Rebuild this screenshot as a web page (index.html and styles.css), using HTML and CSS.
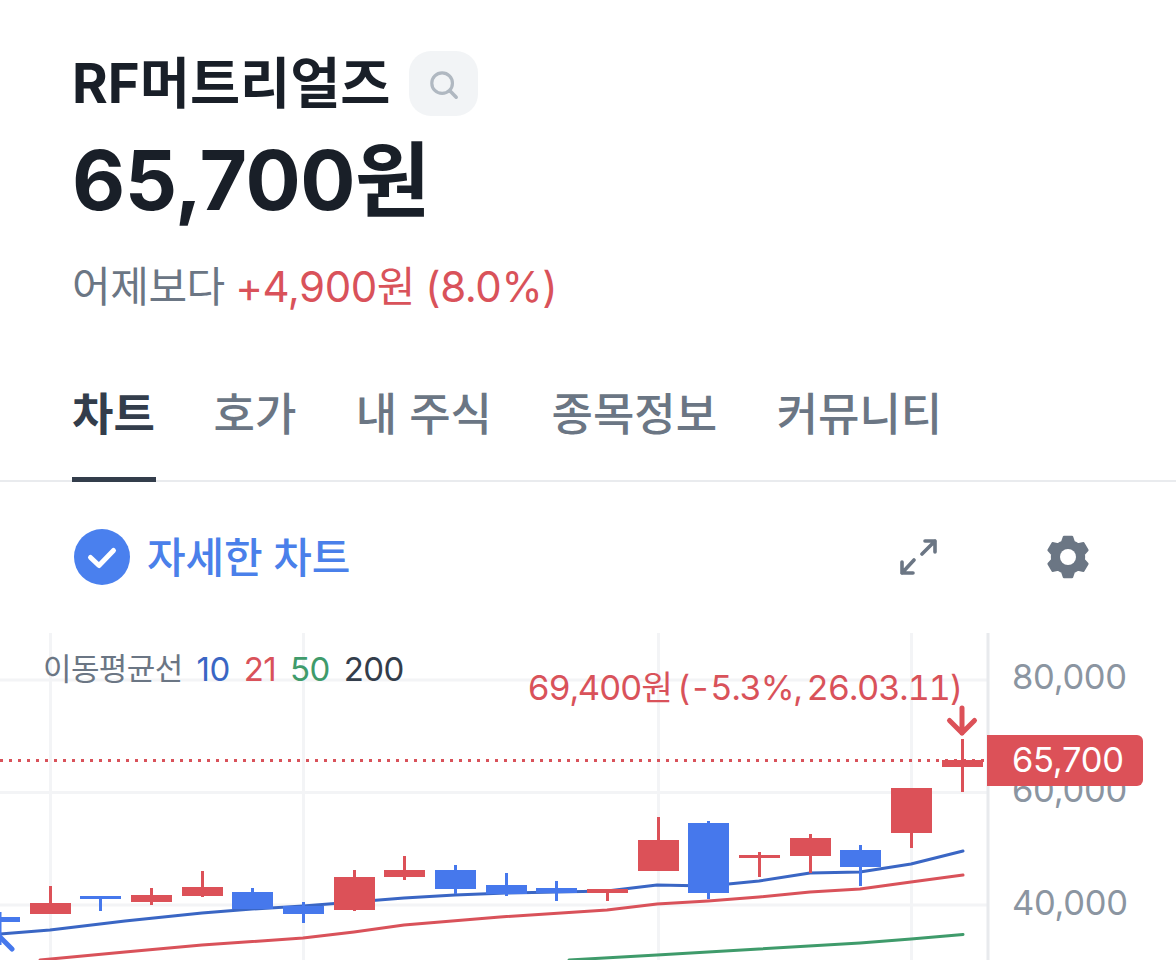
FILE: index.html
```html
<!DOCTYPE html>
<html lang="ko">
<head>
<meta charset="utf-8">
<title>RF머트리얼즈</title>
<link rel="stylesheet" href="styles.css">
</head>
<body>
<main class="page">
  <header class="stock">
    <div class="stock-title">
      <h1 class="stock-name">RF머트리얼즈</h1>
      <button class="search-btn" aria-label="검색">
        <svg class="search-icon" viewBox="0 0 32 32"><circle cx="14" cy="14" r="11" fill="none" stroke="#b0b8c1" stroke-width="3.4"/><path d="M22.5 22.5L29 29" stroke="#b0b8c1" stroke-width="3.8" stroke-linecap="round"/></svg>
      </button>
    </div>
    <div class="stock-price">65,700원</div>
    <div class="stock-diff">어제보다 <span class="up">+4,900원 (8.0%)</span></div>
  </header>
  <nav class="tabs">
    <a class="tab active">차트</a>
    <a class="tab">호가</a>
    <a class="tab">내 주식</a>
    <a class="tab">종목정보</a>
    <a class="tab">커뮤니티</a>
  </nav>
  <section class="toolbar">
    <div class="detail">
      <svg class="check" viewBox="0 0 56 56"><circle cx="28" cy="28" r="28" fill="#4a80ee"/><path d="M16.5 28.5L25 36.5L39.5 21.5" fill="none" stroke="#fff" stroke-width="5" stroke-linecap="round" stroke-linejoin="round"/></svg>
      <span class="detail-label">자세한 차트</span>
    </div>
    <div class="tools">
      <svg class="expand" viewBox="0 0 38 38"><path d="M23 16L36 3M26 3H36V14M15 22L3 35M3 24V35H14" fill="none" stroke="#6b7684" stroke-width="3.600" stroke-linecap="round" stroke-linejoin="round"/></svg>
      <svg class="gear" viewBox="0 0 44 44"><path fill="#6b7684" fill-rule="evenodd" d="M18 2H26L27.800 7.200Q30.100 8 32 9.400L37.400 8.300L41.400 15.200L37.800 19.300Q38.100 22 37.800 24.700L41.400 28.800L37.400 35.700L32 34.600Q30.100 36 27.800 36.800L26 42H18L16.200 36.800Q13.900 36 12 34.600L6.600 35.700L2.600 28.800L6.200 24.700Q5.900 22 6.200 19.300L2.600 15.200L6.600 8.300L12 9.400Q13.900 8 16.200 7.200ZM22 14A8 8 0 1 0 22 30A8 8 0 1 0 22 14Z" stroke="#6b7684" stroke-width="2.400" stroke-linejoin="round"/><circle cx="22" cy="22" r="8" fill="#fff"/></svg>
    </div>
  </section>
  <section class="chart">
    <svg class="chart-svg" viewBox="0 630 1176 330">
      <g class="grid">
        <path d="M50.500 633V960M303.500 633V960M658.500 633V960M911.500 633V960M0 680H987M0 792.500H987M0 905H987"/>
      </g>
      <path class="axis" d="M988 633V960"/>
      <path class="last" d="M0 760.500H985"/>
      <g class="ma">
        <path stroke="#3a66c4" d="M0 934L50 930L125 921L202 913L252 909L303 906L354 902L404 898L455 895L506 893L607 891L657 885L708 886L759 881L810 873L860 872L911 864L963 851"/>
        <path stroke="#d9525a" d="M40 960L125 952L202 945L303 938L354 932L404 925L500 917L607 910L657 904L708 901L759 897L810 892L860 889L911 882L963 875"/>
        <path stroke="#3f9b6b" d="M569 960L657 955L759 949L860 943L911 939L963 934.500"/>
      </g>
      <g class="down">
        <path d="M50.500 886V914M151.500 888V905M202.500 871V897M354.500 870V911M404.500 856V880M607.500 889V901M658.500 817V871M759.500 852V877M810.500 834V873M911.500 788V848M962.500 739V792"/>
        <rect x="30" y="903" width="41" height="11"/>
        <rect x="131" y="895" width="41" height="7"/>
        <rect x="182" y="887" width="41" height="9"/>
        <rect x="334" y="877" width="41" height="33"/>
        <rect x="384" y="870" width="41" height="7"/>
        <rect x="587" y="889" width="41" height="4"/>
        <rect x="638" y="840" width="41" height="31"/>
        <rect x="739" y="855" width="41" height="3"/>
        <rect x="790" y="838" width="41" height="18"/>
        <rect x="891" y="788" width="41" height="45"/>
        <rect x="942" y="760" width="41" height="7"/>
      </g>
      <g class="rise">
        <path d="M0 912V945M100.500 896V911M252.500 888V909M303.500 902V923M455.500 865V894M506.500 873V896M556.500 881V901M708.500 821V899M860.500 845V886"/>
        <rect x="0" y="917" width="20" height="5"/>
        <rect x="80" y="896" width="41" height="3"/>
        <rect x="232" y="892" width="41" height="17"/>
        <rect x="283" y="906" width="41" height="8"/>
        <rect x="435" y="870" width="41" height="19"/>
        <rect x="486" y="885" width="41" height="9"/>
        <rect x="536" y="888" width="41" height="5"/>
        <rect x="688" y="823" width="41" height="70"/>
        <rect x="840" y="850" width="41" height="17"/>
      </g>
      <path class="arrow-up" d="M-12 949L0 937L12 949"/>
      <path class="arrow-down" d="M962 708V733M949.500 720.500L962 733L974.500 720.500"/>
    </svg>
    <div class="legend">
      <span class="legend-title">이동평균선</span>
      <span class="ma10">10</span>
      <span class="ma21">21</span>
      <span class="ma50">50</span>
      <span class="ma200">200</span>
    </div>
    <div class="marker">69,400원 (-5.3%, 26.03.11)</div>
    <span class="tick tick-80">80,000</span>
    <span class="tick tick-60">60,000</span>
    <span class="tick tick-40">40,000</span>
    <div class="price-tag">65,700</div>
  </section>
</main>
</body>
</html>
```

FILE: styles.css
```css
* { box-sizing: border-box; }
html, body { margin: 0; padding: 0; background: #fff; }
body {
  width: 1176px;
  height: 960px;
  overflow: hidden;
  font-family: Inter, "Noto Sans CJK KR", "Noto Sans", sans-serif;
  color: #191f28;
}
.page { display: flex; flex-direction: column; }

.stock { padding: 51px 0 0 72px; }
.stock-title { display: flex; align-items: center; gap: 19px; height: 65px; }
.stock-name { margin: 0; font-size: 54.500px; font-weight: 700; line-height: 65px; letter-spacing: 0; }
.search-btn {
  display: flex; align-items: center; justify-content: center;
  width: 69px; height: 65px; padding: 2px 0 0;
  border: 0; border-radius: 22px; background: #f2f4f6;
}
.search-icon { width: 30px; height: 30px; }
.stock-price { margin-top: 19px; font-size: 82px; font-weight: 700; line-height: 92px; letter-spacing: -.5px; }
.stock-diff { margin-top: 32px; font-size: 42px; line-height: 56px; color: #6b7684; letter-spacing: -.45px; word-spacing: -1px; }
.up { color: #d9525a; }

.tabs {
  display: flex; gap: 59.500px;
  margin-top: 48px; padding-left: 72px; height: 119px;
  border-bottom: 2px solid #e9ebee;
}
.tab { height: 119px; padding-top: 22px; font-size: 45px; line-height: 60px; font-weight: 500; color: #6b7684; }
.tab.active { font-weight: 700; color: #333d4b; border-bottom: 5px solid #333d4b; width: 84px; margin-right: -2px; }

.toolbar {
  display: flex; align-items: center; justify-content: space-between;
  height: 148px; padding: 2px 86px 0 74px;
}
.detail { display: flex; align-items: center; gap: 17px; }
.check { width: 56px; height: 56px; }
.detail-label { margin-bottom: 6px; font-size: 42px; font-weight: 500; color: #4a80ea; letter-spacing: -.2px; }
.tools { display: flex; align-items: center; gap: 109px; }
.expand { width: 38px; height: 38px; }
.gear { width: 44px; height: 44px; }

.chart { position: relative; height: 330px; overflow: hidden; }
.chart-svg { position: absolute; left: 0; top: 0; width: 1176px; height: 330px; }
.grid path { fill: none; stroke: #f3f4f6; stroke-width: 3; }
.axis { fill: none; stroke: #e8eaed; stroke-width: 3; }
.last { fill: none; stroke: #d9525a; stroke-width: 3; stroke-dasharray: 3 6; }
.ma path { fill: none; stroke-width: 3; stroke-linejoin: round; stroke-linecap: round; }
.down rect { fill: #dc5158; }
.down path { stroke: #dc5158; stroke-width: 3; fill: none; }
.rise rect { fill: #4678ec; }
.rise path { stroke: #4678ec; stroke-width: 3; fill: none; }
.arrow-up { fill: none; stroke: #4678ec; stroke-width: 5; stroke-linecap: round; stroke-linejoin: round; }
.arrow-down { fill: none; stroke: #dc5158; stroke-width: 5; stroke-linecap: round; stroke-linejoin: round; }

.legend {
  position: absolute; left: 43px; top: 18px;
  display: flex; gap: 14px;
  font-size: 33px; line-height: 42px;
  letter-spacing: -.6px;
}
.legend-title { color: #6b7684; font-size: 31px; }
.ma10 { color: #3a66c4; }
.ma21 { color: #d9525a; }
.ma50 { color: #3f9b6b; }
.ma200 { color: #333d4b; }
.marker {
  position: absolute; right: 214px; top: 37px;
  font-size: 34.500px; line-height: 42px; color: #d9525a; white-space: nowrap;
  font-variant-numeric: tabular-nums; letter-spacing: -1.2px; word-spacing: -3px;
}
.tick { position: absolute; left: 1012px; font-size: 34.500px; line-height: 40px; color: #8b95a1; letter-spacing: -.3px; }
.tick-80 { top: 27px; }
.tick-60 { top: 140px; }
.tick-40 { top: 253px; }
.price-tag {
  position: absolute; left: 987px; top: 105px;
  width: 156px; height: 51px; padding-left: 25px;
  border-radius: 0 6px 6px 0;
  background: #dc5158; color: #fff;
  font-size: 34.500px; line-height: 50px; letter-spacing: -.3px;
}
```
